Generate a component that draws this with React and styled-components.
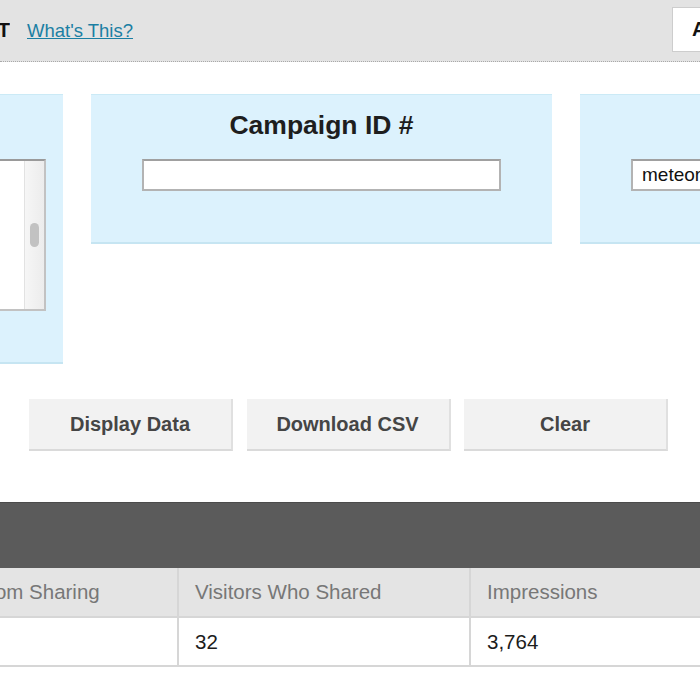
import React from 'react';
import styled, { createGlobalStyle } from 'styled-components';

const GlobalStyle = createGlobalStyle`
  html, body {
    margin: 0;
    padding: 0;
    width: 700px;
    height: 700px;
    overflow: hidden;
    background: #fff;
    font-family: "Liberation Sans", Arial, sans-serif;
  }
`;

const Page = styled.div`
  width: 700px;
  height: 700px;
  overflow: hidden;
`;

const Header = styled.div`
  height: 61px;
  background: #e3e3e3;
  border-bottom: 1px dotted #a9a9a9;
  display: flex;
  align-items: center;
`;

const TitleClip = styled.div`
  width: 10px;
  overflow: hidden;
  display: flex;
  justify-content: flex-end;
  flex-shrink: 0;
`;

const Title = styled.h1`
  margin: 0;
  font-size: 20px;
  font-weight: bold;
  color: #111;
  white-space: nowrap;
  flex-shrink: 0;
`;

const HelpLink = styled.a`
  margin-left: 17px;
  margin-right: auto;
  font-size: 18.5px;
  color: #1b7fa3;
  text-decoration: underline;
  white-space: nowrap;
`;

const RangeBox = styled.div`
  align-self: flex-start;
  margin-top: 7px;
  margin-right: -92px;
  width: 120px;
  height: 45px;
  flex-shrink: 0;
  box-sizing: border-box;
  background: #fff;
  border: 1px solid #cdcdcd;
  padding-left: 19px;
  display: flex;
  align-items: center;
  font-size: 20px;
  font-weight: bold;
  color: #111;
  white-space: nowrap;
  overflow: hidden;
`;

const FilterRow = styled.div`
  display: flex;
  align-items: flex-start;
  gap: 28px;
  margin-top: 32px;
  margin-left: -398px;
`;

const Panel = styled.div`
  width: 461px;
  height: ${p => p.$height}px;
  flex-shrink: 0;
  box-sizing: border-box;
  background: #dcf2fd;
  border-top: 1px solid #cbeaf6;
  border-bottom: 2px solid #c6e5f2;
  padding-top: 14px;
  display: flex;
  flex-direction: column;
  align-items: center;
`;

const PanelTitle = styled.h2`
  margin: 0;
  height: 32px;
  line-height: 32px;
  font-size: 26.5px;
  font-weight: bold;
  color: #1e1e1e;
  white-space: nowrap;
`;

const TextInput = styled.div`
  margin-top: 18px;
  width: 359px;
  height: 32px;
  box-sizing: border-box;
  background: #fff;
  border: 2px solid #b3b3b3;
  border-top-color: #a0a0a0;
  padding: 0 9px;
  display: flex;
  align-items: center;
  font-size: 19px;
  color: #111;
  white-space: nowrap;
  overflow: hidden;
`;

const ListBox = styled.div`
  margin-top: 18px;
  width: 427px;
  height: 152px;
  box-sizing: border-box;
  background: #fff;
  border: 1px solid #b7b7b7;
  border-top: 2px solid #9a9a9a;
  border-right: 2px solid #c2c2c2;
  border-bottom: 2px solid #c2c2c2;
  display: flex;
  justify-content: flex-end;
`;

const ScrollTrack = styled.div`
  width: 19px;
  border-left: 1px solid #e2e2e2;
  background: linear-gradient(to right, #f6f6f6, #ececec);
  display: flex;
  justify-content: center;
`;

const ScrollThumb = styled.div`
  margin-top: 62px;
  width: 9px;
  height: 24px;
  border-radius: 5px;
  background: #c2c2c2;
`;

const ButtonRow = styled.div`
  display: flex;
  gap: 13.5px;
  margin-top: 35px;
  padding-left: 29px;
`;

const ActionButton = styled.button`
  width: 204px;
  height: 52px;
  flex-shrink: 0;
  box-sizing: border-box;
  background: #f2f2f2;
  border: none;
  border-right: 2px solid #e0e0e0;
  border-bottom: 2px solid #dadada;
  font-family: inherit;
  font-size: 20px;
  font-weight: bold;
  color: #454545;
  padding: 0;
`;

const DarkBar = styled.div`
  margin-top: 51px;
  height: 65px;
  background: #5b5b5b;
  border-top: 1px solid #4b4b4b;
`;

const Table = styled.div`
  display: grid;
  grid-template-columns: repeat(4, 292px);
  margin-left: -113px;
`;

const Cell = styled.div`
  height: ${p => (p.$head ? 50 : 49)}px;
  box-sizing: border-box;
  background: ${p => (p.$head ? '#e4e4e4' : '#fff')};
  border-right: 2px solid #d6d6d6;
  border-bottom: 2px solid #d6d6d6;
  padding-left: 16px;
  display: flex;
  align-items: center;
  font-size: 20.5px;
  color: ${p => (p.$head ? '#777' : '#1c1c1c')};
  white-space: nowrap;
`;

const headers = ['Visitors From Sharing', 'Visitors Who Shared', 'Impressions', 'Clicks'];
const values = ['118', '32', '3,764', '241'];

export default function App() {
  return (
    <Page>
      <GlobalStyle />
      <Header>
        <TitleClip>
          <Title>SHARING REPORT</Title>
        </TitleClip>
        <HelpLink href="#">What's This?</HelpLink>
        <RangeBox>All Time</RangeBox>
      </Header>

      <FilterRow>
        <Panel $height={270}>
          <PanelTitle>Site</PanelTitle>
          <ListBox>
            <ScrollTrack>
              <ScrollThumb />
            </ScrollTrack>
          </ListBox>
        </Panel>
        <Panel $height={150}>
          <PanelTitle>Campaign ID #</PanelTitle>
          <TextInput />
        </Panel>
        <Panel $height={150}>
          <PanelTitle>Campaign Name</PanelTitle>
          <TextInput>meteor-shower</TextInput>
        </Panel>
      </FilterRow>

      <ButtonRow>
        <ActionButton>Display Data</ActionButton>
        <ActionButton>Download CSV</ActionButton>
        <ActionButton>Clear</ActionButton>
      </ButtonRow>

      <DarkBar />

      <Table>
        {headers.map(h => (
          <Cell key={h} $head>{h}</Cell>
        ))}
        {values.map((v, i) => (
          <Cell key={i}>{v}</Cell>
        ))}
      </Table>
    </Page>
  );
}
